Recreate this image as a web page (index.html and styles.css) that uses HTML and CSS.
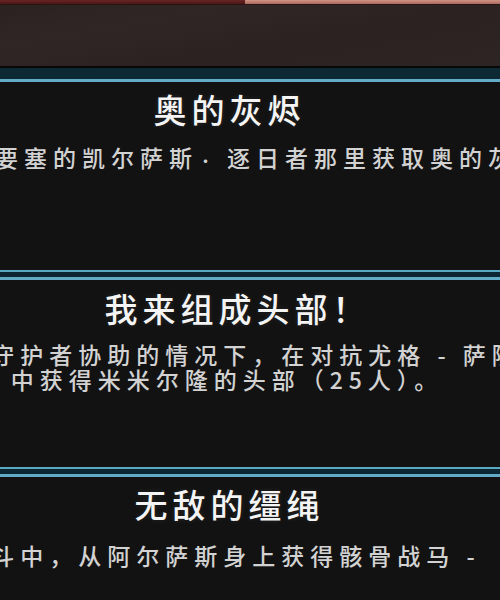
FILE: index.html
```html
<!DOCTYPE html>
<html lang="zh-CN">
<head>
    <meta charset="UTF-8">
    <meta name="viewport" content="width=device-width, initial-scale=1.0">
    <title>成就</title>
    <link rel="stylesheet" href="styles.css">
</head>
<body>
<div class="header">
    <div class="header-bar">
        <div class="bar-left"></div>
        <div class="bar-right"></div>
    </div>
</div>

<div class="achievements">
    <div class="achievement first">
        <div class="rule"></div>
        <div class="achievement-body">
            <div class="title">奥的灰烬</div>
            <div class="desc">
                <span class="line">从风暴要塞的凯尔萨斯<span class="dot">·</span>逐日者那里获取奥的灰烬</span>
            </div>
        </div>
    </div>

    <div class="achievement second">
        <div class="rule"></div>
        <div class="achievement-body">
            <div class="title">我来组成头部！</div>
            <div class="desc">
                <span class="line">在没有任何守护者协助的情况下，在对抗尤格 - 萨隆的战斗</span>
                <span class="line">中获得米米尔隆的头部（25人）。</span>
            </div>
        </div>
    </div>

    <div class="achievement third">
        <div class="rule"></div>
        <div class="achievement-body">
            <div class="title">无敌的缰绳</div>
            <div class="desc">
                <span class="line">战斗中，从阿尔萨斯身上获得骸骨战马 -&nbsp;</span>
            </div>
        </div>
    </div>
</div>
</body>
</html>
```

FILE: styles.css
```css
* {
    margin: 0;
    padding: 0;
    box-sizing: border-box;
}

body {
    width: 500px;
    height: 600px;
    overflow: hidden;
    background: #121213;
    font-family: "Noto Sans CJK SC", "Noto Sans", sans-serif;
}

/* Top strip of the window */
.header {
    height: 66px;
    background: linear-gradient(170deg, #2a2121 0%, #302626 30%, #2c2222 60%, #2d2424 100%);
}

.header-bar {
    display: flex;
    height: 5px;
    border-bottom: 1px solid #2a1414;
}

.bar-left {
    flex: 0 0 245px;
    background: linear-gradient(180deg, #6a2424, #4a1616);
}

.bar-right {
    flex: 1;
    background: linear-gradient(180deg, #d09484, #a86a5c);
}

/* Achievement rows */
.achievement {
    background: #121213;
}

.rule {
    height: 10px;
    background: #0c2733;
    border-top: 2px solid #5aa9c2;
    border-bottom: 3px solid #62acc8;
}

.first .rule {
    height: 16px;
    background: #0d2a34;
    border-top: 2px solid #080808;
}

.achievement-body {
    display: flex;
    flex-direction: column;
    align-items: center;
    padding-right: 46px;
    color: #f4f4f4;
}

.title {
    font-size: 33px;
    font-weight: 500;
    line-height: 40px;
    letter-spacing: 5px;
    margin-right: -5px;
    white-space: nowrap;
    text-shadow: 0 0 2px rgba(0, 0, 0, 0.9), 0 0 4px rgba(255, 255, 255, 0.15);
}

/* the full-width ！ leaves empty room on the right */
.second .title {
    padding-left: 16px;
}

.desc {
    display: flex;
    flex-direction: column;
    align-items: center;
    color: #d2d2d2;
    font-size: 23px;
    font-weight: 500;
    line-height: 25px;
    letter-spacing: 6px;
}

.line {
    white-space: nowrap;
}

.dot {
    font-size: 15px;
    letter-spacing: 14px;
}

.first .achievement-body {
    height: 188px;
    padding-top: 7px;
    gap: 16px;
}

.second .achievement-body {
    height: 187px;
    padding-top: 8px;
    gap: 14px;
}

.third .achievement-body {
    height: 122px;
    padding-top: 7px;
    gap: 19px;
}
```
